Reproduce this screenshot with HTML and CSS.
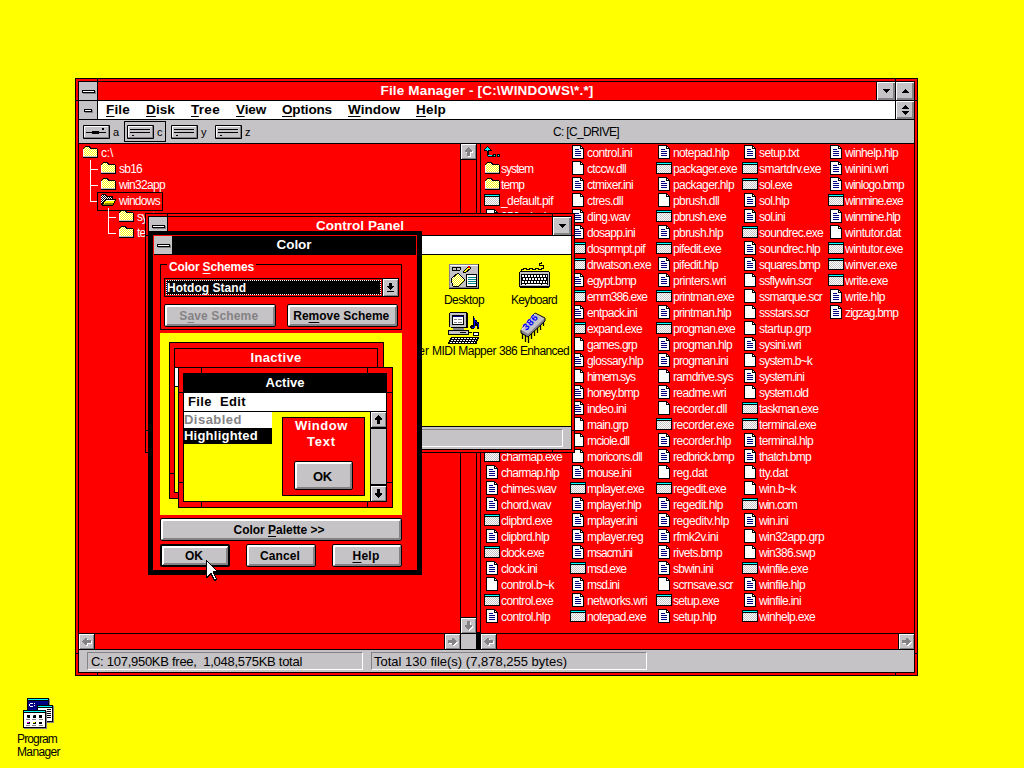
FILE: index.html
```html
<!DOCTYPE html>
<html lang="en">
<head>
<meta charset="utf-8">
<title>File Manager</title>
<link rel="stylesheet" href="styles.css">
</head>
<body>
<svg class="defs" width="0" height="0" shape-rendering="crispEdges">
  <defs>
    <pattern id="dith-y" width="2" height="2" patternUnits="userSpaceOnUse"><rect width="2" height="2" fill="#fff"/><rect width="1" height="1" fill="#ff0"/><rect x="1" y="1" width="1" height="1" fill="#ff0"/></pattern>
  </defs>
  <symbol id="i-folder" viewBox="0 0 16 16"><path d="M1 3h1V2h1V1h5v1h1v1h6v1h1v9H1z" fill="#000"/><path d="M1 4h1V3h1V2h4v1h1v1h7v8H1z" fill="#fff"/><path d="M3 2.500h4M2 3.500h6M3 4.500h12M2 5.500h13M3 6.500h12M2 7.500h13M3 8.500h12M2 9.500h13M3 10.500h12" stroke="#ff0" stroke-dasharray="1 1" fill="none"/><path d="M1 11h14v1H1z" fill="#c6c3c6"/></symbol>
  <symbol id="i-open" viewBox="0 0 16 16"><path d="M1 2h1V1h4v1h1v1h6v3h3v2h-1v2h-1v2h-1v1H2v-1H1z" fill="#000"/><path d="M2 2.500h4M1 3.500h6M2 4.500h10M1 5.500h11M2 6.500h3M1 7.500h4M2 8.500h2M1 9.500h2" stroke="#fff" stroke-dasharray="1 1" fill="none"/><path d="M6 7h9v1h-1v2h-1v2H3v-1h1V9h1V8h1z" fill="#ff0"/><path d="M6 7h8v1H6z" fill="#fff"/><path d="M5 10h8v2H3v-1h2z" fill="#848200"/></symbol>
  <symbol id="i-doc" viewBox="0 0 16 16"><path d="M2 0h9v1h1v1h1v1h1v11H2z" fill="#000"/><path d="M3 1h7v3h3v9H3z" fill="#fff"/><path d="M11 2h1v1h-1z" fill="#fff"/><path d="M5 4h4v1H5zM5 6h6v1H5zM5 8h6v1H5zM5 10h6v1H5z" fill="#000084"/></symbol>
  <symbol id="i-file" viewBox="0 0 16 16"><path d="M2 0h9v1h1v1h1v1h1v11H2z" fill="#000"/><path d="M3 1h7v3h3v9H3z" fill="#fff"/><path d="M11 2h1v1h-1z" fill="#fff"/></symbol>
  <symbol id="i-app" viewBox="0 0 16 16"><path d="M0 1h16v12H0z" fill="#000"/><path d="M1 2h14v1H1z" fill="#0ff"/><path d="M1 4h14v8H1z" fill="#fff"/><path d="M1 4.500h14M2 5.500h13M1 6.500h14M2 7.500h13M1 8.500h14M2 9.500h13M1 10.500h14M2 11.500h13" stroke="#c6c3c6" stroke-dasharray="1 1" fill="none"/></symbol>
  <symbol id="i-up" viewBox="0 0 16 16"><path d="M3 1h1v1h1v1h1v1h1v1h1v1H5v4h4v2H4v-1H3V6H0V5h0V4h1V3h1V2h1zM9 9h3v3H9zM13 9h3v3h-3z" fill="#000"/><path d="M3 2h1v1h1v1h1v1H4v5h4v1H4V6H3V5H1V4h1V3h1zM10 10h1v1h-1zM14 10h1v1h-1z" fill="#0ff"/></symbol>
  <symbol id="a-up" viewBox="0 0 9 9"><path d="M4 0h1v1h1v1h1v1h1v2H6v4H3V5H1V3h1V2h1V1h1z"/></symbol>
  <symbol id="a-down" viewBox="0 0 9 9"><path d="M4 9h1V8h1V7h1V6h1V4H6V0H3v4H1v2h1v1h1v1h1z"/></symbol>
  <symbol id="a-left" viewBox="0 0 9 9"><path d="M0 4v1h1v1h1v1h1v1h2V6h4V3H5V1H3v1H2v1H1v1z"/></symbol>
  <symbol id="a-right" viewBox="0 0 9 9"><path d="M9 4v1H8v1H7v1H6v1H4V6H0V3h4V1h2v1h1v1h1v1z"/></symbol>
  <symbol id="t-down" viewBox="0 0 7 4"><path d="M0 0h7v1H6v1H5v1H4v1H3V3H2V2H1V1H0z"/></symbol>
  <symbol id="t-up" viewBox="0 0 7 4"><path d="M0 4h7V3H6V2H5V1H4V0H3v1H2v1H1v1H0z"/></symbol>
  <symbol id="plate" viewBox="0 0 27 14"><path d="M0 0h27v14H0z"/><path d="M1 1h25v12H1z" fill="#848284"/><path d="M1 1h24v11H1z" fill="#fff"/><path d="M2 2h23v10H2z" fill="#c6c3c6"/></symbol>
  <symbol id="hard" viewBox="0 0 27 14"><use href="#plate"/><path d="M3 4h20v1H3zM3 7h20v1H3zM5 10h2v1H5z"/></symbol>
  <symbol id="floppy" viewBox="0 0 27 14"><use href="#plate"/><path d="M3 7h20v1H3zM9 6h7v3H9zM19 3h2v2h-2z"/></symbol>
</svg>

<main class="desktop">

<section class="win fm">
  <i class="nv top nl"></i><i class="nv top nr"></i><i class="nv bot nl"></i><i class="nv bot nr"></i>
  <i class="nh lft n1"></i><i class="nh rgt n1"></i><i class="nh lft n2"></i><i class="nh rgt n2"></i>
  <div class="inner">
    <header class="caption">
      <span class="sys"><i class="bar"></i></span>
      <h1 class="title"><span class="t" data-w="213">File Manager - [C:\WINDOWS\*.*]</span></h1>
      <span class="capbtn"><svg width="7" height="4"><use href="#t-down"/></svg></span>
      <span class="capbtn"><svg width="7" height="4"><use href="#t-up"/></svg></span>
    </header>
    <nav class="menu">
      <span class="sys"><i class="bar short"></i></span>
      <span class="items">
        <span class="t" data-w="24"><u>F</u>ile</span><span class="t" data-w="29"><u>D</u>isk</span><span class="t" data-w="29"><u>T</u>ree</span><span class="t" data-w="30"><u>V</u>iew</span><span class="t" data-w="50"><u>O</u>ptions</span><span class="t" data-w="52"><u>W</u>indow</span><span class="t" data-w="30"><u>H</u>elp</span>
      </span>
      <span class="capbtn restore"><svg width="7" height="4"><use href="#t-up"/></svg><svg width="7" height="4"><use href="#t-down"/></svg></span>
    </nav>
    <div class="toolbar">
      <div class="drives">
        <span class="drive"><svg class="dicon" width="27" height="14"><use href="#floppy"/></svg>a</span>
        <span class="drive on"><svg class="dicon" width="27" height="14"><use href="#hard"/></svg>c</span>
        <span class="drive"><svg class="dicon" width="27" height="14"><use href="#hard"/></svg>y</span>
        <span class="drive"><svg class="dicon" width="27" height="14"><use href="#hard"/></svg>z</span>
      </div>
      <span class="volume"><span class="t" data-w="66">C: [C_DRIVE]</span></span>
    </div>
    <div class="panes">
      <div class="pane left">
        <div class="view">
          <ul class="tree">
            <li class="l0"><svg width="16" height="16"><use href="#i-folder"/></svg><span class="name">c:\</span></li>
            <li class="l1"><svg width="16" height="16"><use href="#i-folder"/></svg><span class="name">sb16</span></li>
            <li class="l1"><svg width="16" height="16"><use href="#i-folder"/></svg><span class="name">win32app</span></li>
            <li class="l1 last sel"><svg width="16" height="16"><use href="#i-open"/></svg><span class="name">windows</span></li>
            <li class="l2"><svg width="16" height="16"><use href="#i-folder"/></svg><span class="name">system</span></li>
            <li class="l2 last"><svg width="16" height="16"><use href="#i-folder"/></svg><span class="name">temp</span></li>
          </ul>
          <div class="vscroll"><span class="sb dim"><svg width="9" height="9"><use href="#a-up"/></svg></span><span class="sb dim"><svg width="9" height="9"><use href="#a-down"/></svg></span></div>
        </div>
        <div class="hscroll"><span class="sb dim"><svg width="9" height="9"><use href="#a-left"/></svg></span><span class="sb dim"><svg width="9" height="9"><use href="#a-right"/></svg></span><span class="corner"></span></div>
      </div>
      <div class="split"></div>
      <div class="pane right">
        <div class="view files" id="files"></div>
        <div class="hscroll"><span class="sb dim"><svg width="9" height="9"><use href="#a-left"/></svg></span><span class="sb dim"><svg width="9" height="9"><use href="#a-right"/></svg></span></div>
      </div>
    </div>
    <footer class="status">
      <span class="field free"><span class="t" data-w="211">C: 107,950KB free, &nbsp;1,048,575KB total</span></span>
      <span class="field total"><span class="t" data-w="193">Total 130 file(s) (7,878,255 bytes)</span></span>
    </footer>
  </div>
</section>

<section class="win cp">
  <i class="nv top nl"></i><i class="nv top nr"></i><i class="nv bot nl"></i><i class="nv bot nr"></i>
  <i class="nh lft n1"></i><i class="nh rgt n1"></i><i class="nh lft n2"></i><i class="nh rgt n2"></i>
  <div class="inner">
    <header class="caption">
      <span class="sys"><i class="bar"></i></span>
      <h2 class="title"><span class="t" data-w="88">Control Panel</span></h2>
      <span class="capbtn"><svg width="7" height="4"><use href="#t-down"/></svg></span>
    </header>
    <div class="menu"></div>
    <div class="applets">
      <figure></figure>
      <figure>
        <svg width="32" height="32" shape-rendering="crispEdges">
          <path d="M1 3h30v25H1z" fill="#000"/><path d="M1 3h29v24H1z" fill="#848284"/><path d="M2 4h28v22H2z" fill="#c6c3c6"/><path d="M2 4h28v1H2z" fill="#fff"/>
          <path d="M4 6h9v1H4zM4 7h1v3H4zM8 7h1v3H8zM12 7h1v2h-1zM5 9h3v1H5zM9 9h3v1H9z" fill="#000"/>
          <path d="M3 18l7-6 7 7-7 7-5-1z" fill="url(#dith-y)" stroke="#000"/><path d="M15 11l6-6 2 2-6 5z" fill="#ff0" stroke="#000"/><path d="M20 5h2v2h-2z" fill="red"/>
          <path d="M18 13h11v13H18z" fill="#000"/><path d="M19 14h9v11h-9z" fill="#fff"/><path d="M20 16h8v1h-8zM20 18h8v1h-8zM20 20h8v1h-8zM20 22h8v1h-8z" fill="#008284"/>
        </svg>
        <figcaption><span class="t" data-w="40">Desktop</span></figcaption>
      </figure>
      <figure>
        <svg width="32" height="32" shape-rendering="crispEdges">
          <path d="M3.500 10V8h2V7h3v1h3V7h3v1h3V7h3v1h3V7h2V4h-4V2h2V1" fill="none" stroke="#000"/>
          <path d="M2 10h29v1h1v15h-1v1H2v-1H1V11h1z" fill="#000"/><path d="M2 11h29v14H2z" fill="#c6c3c6"/><path d="M3 13h27v11H3z" fill="#000"/>
          <path d="M4 15h25M5 18h24M4 21h25" stroke="#fff" stroke-width="2" stroke-dasharray="2 1"/><path d="M4 23.500h3m1 0h15m1 0h5" stroke="#fff"/>
        </svg>
        <figcaption><span class="t" data-w="46">Keyboard</span></figcaption>
      </figure>
      <figure class="tail"><figcaption>er</figcaption></figure>
      <figure>
        <svg width="32" height="32" shape-rendering="crispEdges">
          <path d="M2 0h17v1h1v15H3v-1H1V1h1z" fill="#000"/><path d="M2 1h16v14H2z" fill="#c6c3c6"/><path d="M4 3h12v10H4z" fill="#000"/><path d="M5 4h10v8H5z" fill="#fff"/><path d="M5 4h10v1H5z" fill="#000084"/><path d="M6 7h3v1H6zM10 7h4v1h-4zM6 10h3v1H6zM10 10h4v1h-4z" fill="#848284"/>
          <path d="M5 16h11v2H5z" fill="#848284"/><path d="M0 18h21v5H0z" fill="#000"/><path d="M1 19h19v3H1z" fill="#c6c3c6"/><path d="M12 20h6v1h-6z"/>
          <path d="M3 25h28v2h-1v2h-1v3H0v-2h1v-2h1v-2h1z" fill="#000"/><path d="M4 26.500h25M3 28.500h25M2 30.500h25" stroke="#fff" stroke-dasharray="2 1"/>
          <path d="M25 4h1v2h1v2h2v2h2v7h-2v-3h-2v-2h-1v5h-3v-1h-1v-2h1v-1h2z" fill="#000"/><path d="M26 6v9h-2M27 9l3 3v3" stroke="#00f" fill="none"/><path d="M25 20h5v3h-5z" fill="#fff" stroke="#000"/><path d="M20 20.500h4" stroke="#000"/>
        </svg>
        <figcaption><span class="t" data-w="64">MIDI Mapper</span></figcaption>
      </figure>
      <figure>
        <svg width="32" height="32">
          <path d="M4.500 21v6M7.500 22v8M10.500 22v9M13.500 19v8M16.500 16v8M19.500 13v8M22.500 10v8M25.500 6v8" stroke="#000" stroke-width="1.300"/>
          <path d="M3 18L17 1l10 5v3L10 25l-7-4z" fill="#848284" stroke="#000"/><path d="M3 18L17 1.500l9.500 5L10 22z" fill="#c6c3c6"/><path d="M3.500 18L17 2" stroke="#fff"/>
          <text x="7" y="18" class="chip" transform="rotate(-47 9 17)">386</text>
        </svg>
        <figcaption><span class="t" data-w="70">386 Enhanced</span></figcaption>
      </figure>
    </div>
    <footer class="status"><span class="field"></span></footer>
  </div>
</section>

<section class="dialog">
  <header class="caption"><span class="sys"><i class="bar"></i></span><h2 class="title"><span class="t" data-w="35">Color</span></h2></header>
  <div class="form">
    <div class="group">
      <span class="legend"><span class="t" data-w="85">Color <u>S</u>chemes</span></span>
      <div class="combo"><span class="value"><span class="t" data-w="79">Hotdog Stand</span></span><span class="drop"><svg width="9" height="9" shape-rendering="crispEdges"><path d="M3 0h3v3h2v1H7v1H6v1H5v1H4V6H3V5H2V4H1V3h2zM1 8h7v1H1z"/></svg></span></div>
      <div class="pair"><button class="btn off"><span class="t" data-w="79">S<u>a</u>ve Scheme</span></button><button class="btn"><span class="t" data-w="96">Re<u>m</u>ove Scheme</span></button></div>
    </div>
    <div class="preview">
      <div class="mini inactive"><i class="nh foot"></i><div class="mbody"><div class="mcap"><span class="t" data-w="51">Inactive</span></div><div class="mmenu"></div><div class="mwork"></div></div></div>
      <div class="mini active">
        <i class="nv top nl"></i><i class="nv top nr"></i><i class="nv bot nl"></i><i class="nv bot nr"></i>
        <i class="nh lft n1"></i><i class="nh rgt n1"></i><i class="nh lft n2"></i><i class="nh rgt n2"></i>
        <div class="mbody">
          <div class="mcap"><span class="t" data-w="39">Active</span></div>
          <div class="mmenu"><span class="t" data-w="24">File</span><span class="t" data-w="26">Edit</span></div>
          <div class="mwork">
            <div class="mlist"><span class="dis"><span class="t" data-w="58">Disabled</span></span><span class="hi"><span class="t" data-w="74">Highlighted</span></span></div>
            <div class="mwin"><span class="t" data-w="53">Window</span><span class="t" data-w="29">Text</span><button class="btn"><span class="t" data-w="19">OK</span></button></div>
            <div class="mscroll"><span class="sb"><svg width="9" height="9"><use href="#a-up"/></svg></span><span class="sb"><svg width="9" height="9"><use href="#a-down"/></svg></span></div>
          </div>
        </div>
      </div>
    </div>
    <button class="btn wide"><span class="t" data-w="91">Color <u>P</u>alette &gt;&gt;</span></button>
    <div class="actions"><button class="btn default"><span class="t" data-w="18">OK</span></button><button class="btn"><span class="t" data-w="40">Cancel</span></button><button class="btn"><span class="t" data-w="27"><u>H</u>elp</span></button></div>
  </div>
</section>

<figure class="progman">
  <svg width="32" height="32" shape-rendering="crispEdges">
    <path d="M5 1h22v13H5z" fill="#848284"/><path d="M4 0h22v13H4z" fill="#000"/><path d="M5 1h20v1H5z" fill="#0ff"/><path d="M5 3h20v10H5z" fill="#000084"/><path d="M7 5h3v1H7zM6 6h1v2H6zM7 8h3v1H7zM11 5h1v1h-1zM11 7h1v1h-1z" fill="#fff"/>
    <path d="M15 8h16v17H15z" fill="#848284"/><path d="M14 7h16v17H14z" fill="#000"/><path d="M15 8h14v1H15z" fill="#0ff"/><path d="M15 10h14v13H15z" fill="#fff"/><path d="M24 11h4v1h-4zM24 13h4v1h-4zM24 15h4v1h-4zM24 17h4v1h-4zM24 19h4v1h-4z"/>
    <path d="M1 13h23v18H1z" fill="#848284"/><path d="M0 12h23v18H0z" fill="#000"/><path d="M1 13h21v1H1z" fill="#0ff"/><path d="M1 15h21v14H1z" fill="#fff"/>
    <path d="M4 17h3v3H4zM10 17h3v3h-3zM16 17h3v3h-3zM4 24h3v2H4zM10 24h3v2h-3zM16 24h3v2h-3z"/><path d="M3 21h4v1H3zM9 21h4v1H9zM16 21h4v1h-4zM3 27h4v1H3zM9 27h4v1H9zM16 27h4v1h-4z" fill="#848284"/><path d="M4 19h1v1H4zM10 17h1v1h-1z" fill="#008284"/><path d="M4 24h2v1H4z" fill="#f0f"/><path d="M10 24h2v1h-2z" fill="#ff0"/>
  </svg>
  <figcaption><span class="t" data-w="40">Program</span><span class="t" data-w="43">Manager</span></figcaption>
</figure>

<svg class="cursor" width="12" height="21" shape-rendering="crispEdges"><path d="M0 0h1v1h1v1h1v1h1v1h1v1h1v1h1v1h1v1h1v1h1v1h1v2H8v2h1v2h1v2h1v2h-1v1H8v-1H7v-2H6v-2H5v-1H4v1H3v1H2v1H0z" fill="#000"/><path d="M1 2h1v1h1v1h1v1h1v1h1v1h1v1h1v1h1v1h1v1H7v3h1v2h1v2h1v1H8v-2H7v-2H6v-2H4v1H3v1H2v1H1z" fill="#fff"/></svg>
</main>
<script src="app.js"></script>
</body>
</html>
```
FILE: styles.css
```css
* { box-sizing: border-box; margin: 0; padding: 0; }
:root { --gray: #c6c3c6; --dark: #848284; --red: #f00; --yellow: #ff0; }
body { font: 12px/16px "Liberation Sans", Arial, sans-serif; color: #000; }
.defs { position: absolute; }
svg { display: block; flex: none; }
use, symbol path { shape-rendering: crispEdges; }
.desktop { position: relative; width: 1024px; height: 768px; overflow: hidden; background: var(--yellow); }
.t { display: inline-block; white-space: nowrap; }
u { text-decoration: underline; text-decoration-thickness: 1px; text-underline-offset: 2px; }

/* windows */
.win { position: absolute; border: 1px solid #000; padding: 2px; background: var(--red); }
.fm { left: 75px; top: 78px; width: 843px; height: 598px; }
.cp { left: 145px; top: 213px; width: 430px; height: 240px; }
.inner { border: 1px solid #000; height: 100%; display: flex; flex-direction: column; }

/* frame notches */
.nv, .nh { position: absolute; background: #000; }
.nv { width: 1px; height: 3px; }
.nh { height: 1px; width: 3px; }
.top { top: 0; } .bot { bottom: 0; } .lft { left: 0; } .rgt { right: 0; }
.nl { left: 21px; } .nr { right: 21px; } .n1 { top: 21px; } .n2 { bottom: 21px; }

.caption { height: 19px; display: flex; border-bottom: 1px solid #000; flex: none; }
.sys { width: 19px; flex: none; background: var(--gray); border-right: 1px solid #000; display: flex; align-items: center; justify-content: center; }
.bar { width: 13px; height: 3px; background: #fff; border: 1px solid #000; box-shadow: 1px 1px var(--dark); }
.bar.short { width: 8px; }
.title { flex: 1; font: bold 13.5px/18px "Liberation Sans", Arial, sans-serif; color: #fff; text-align: center; }
.capbtn { width: 19px; flex: none; border-left: 1px solid #000; background: var(--gray); display: flex; flex-direction: column; align-items: center; justify-content: center; gap: 2px; box-shadow: inset 1px 1px #fff, inset -1px -1px var(--dark), inset -2px -2px var(--dark); }
.menu { height: 19px; flex: none; display: flex; background: #fff; border-bottom: 1px solid #000; font: bold 13.5px/17px "Liberation Sans", Arial, sans-serif; }
.items { flex: 1; display: flex; gap: 16px; padding-left: 8px; }

.toolbar { height: 24px; flex: none; background: var(--gray); border-bottom: 1px solid #000; display: flex; }
.drives { display: flex; gap: 2px; padding: 1px 0 0 1px; width: 474px; font-size: 11px; }
.drive { width: 42px; height: 21px; border: 1px solid transparent; display: flex; align-items: center; gap: 3px; padding-left: 2px; }
.drive.on { border-color: #000; }
.dicon { border-radius: 1px; }
.volume { font-size: 12px; line-height: 25px; }

.panes { height: 506px; flex: none; display: flex; }
.pane { display: flex; flex-direction: column; }
.left { width: 398px; } .right { width: 433px; }
.view { height: 489px; display: flex; }
.split { width: 4px; border-right: 1px solid #000; background: linear-gradient(var(--red) 488px, #000 488px); }
.tree { flex: 1; list-style: none; color: #fff; padding: 1px 0 0 3px; }
.tree li { display: flex; gap: 3px; height: 16px; position: relative; }
.l1 { margin-left: 18px; } .l2 { margin-left: 36px; }
.l1::before, .l2::before { content: ""; position: absolute; left: -10px; top: -1px; width: 7px; height: 9px; border: solid #fff; border-width: 0 0 1px 1px; }
.l1:not(.last)::after, .l2:not(.last)::after { content: ""; position: absolute; left: -10px; top: 8px; width: 1px; height: 7px; background: #fff; }
.sel .name { position: relative; }
.sel .name::before { content: ""; position: absolute; left: -22px; right: -3px; top: -1px; height: 17px; border: 1px solid #000; }
.vscroll { width: 17px; border: solid #000; border-width: 0 1px; display: flex; flex-direction: column; justify-content: space-between; }
.hscroll { height: 17px; border: solid #000; border-width: 1px 0; display: flex; justify-content: space-between; }
.sb { background: var(--gray); display: flex; align-items: center; justify-content: center; width: 15px; height: 15px; flex: none; box-shadow: inset 1px 1px #fff, inset -1px -1px var(--dark); }
.sb.dim { fill: var(--dark); }
.sb.dim svg { filter: drop-shadow(1px 1px 0 #fff); }
.vscroll .sb:first-child { border-bottom: 1px solid #000; height: 16px; }
.vscroll .sb:last-child { border-top: 1px solid #000; height: 16px; }
.hscroll .sb:first-child { border-right: 1px solid #000; width: 16px; }
.hscroll .sb:nth-child(2) { border-left: 1px solid #000; width: 16px; margin-left: auto; }
.corner { width: 17px; background: var(--gray); border: solid #000; border-width: 0 1px; }

.files { padding: 1px 0 0 3px; color: #fff; }
.col { width: 86px; flex: none; }
.file { height: 16px; display: flex; gap: 1px; }
.covered { height: 224px; }

.status { flex: 1; background: var(--gray); display: flex; padding: 2px 8px; gap: 8px; }
.field { height: 18px; border: 1px solid; border-color: var(--dark) #fff #fff var(--dark); font-size: 13px; line-height: 17px; padding-left: 3px; }
.free { width: 276px; } .total { width: 276px; padding-left: 2px; }
.cp .field { flex: 1; }

/* applets */
.applets { height: 172px; flex: none; background: var(--yellow); border-bottom: 1px solid #000; display: grid; grid-template-columns: repeat(3, 70px); grid-auto-rows: 51px; justify-content: end; padding: 3px 2px 0 0; }
.applets figure { display: flex; flex-direction: column; align-items: center; padding-top: 3px; }
.applets figcaption { line-height: 14px; white-space: nowrap; }
.applets .tail { align-items: flex-end; justify-content: flex-end; padding-bottom: 2px; }
.chip { font: bold 10px "Liberation Mono", monospace; fill: #00f; }

/* colour dialog */
.dialog { position: absolute; left: 148px; top: 231px; width: 274px; height: 344px; border: solid #000; border-width: 4px 5px 5px; background: var(--red); padding: 1px; font-weight: bold; }
.dialog .caption { background: #000; }
.dialog .sys { width: 18px; border: 0; }
.form { width: 242px; margin: 9px 0 0 6px; }
.group { position: relative; height: 66px; border: 1px solid #000; padding: 13px 3px 0; }
.legend { position: absolute; left: 6px; top: -4px; line-height: 12px; padding: 0 2px; background: var(--red); color: #fff; }
.combo { width: 235px; height: 19px; border: 1px solid #000; padding: 1px; display: flex; }
.value { width: 216px; background: #000; color: #fff; border: 1px dotted #fff; line-height: 15px; height: 15px; }
.drop { width: 16px; height: 17px; margin: -1px -1px 0 1px; border-left: 1px solid #000; background: var(--gray); display: flex; align-items: center; justify-content: center; box-shadow: inset 1px 1px #fff, inset -1px -1px var(--dark); }
.pair { display: flex; gap: 11px; margin-top: 7px; }
.btn { height: 23px; border: 1px solid #000; border-radius: 2px; background: var(--gray); font: bold 12px/17px "Liberation Sans", Arial, sans-serif; color: #000; box-shadow: inset 1px 1px #fff, inset -1px -1px var(--dark), inset 2px 2px #fff, inset -2px -2px var(--dark); display: flex; align-items: center; justify-content: center; padding: 1px 2px 0 0; }
.pair .btn { width: 112px; }
.btn.off { color: var(--dark); }
.btn.wide { width: 242px; margin-top: 3px; padding-right: 4px; }
.btn.default { border-width: 2px; }
.actions { display: flex; justify-content: space-between; margin-top: 3px; }
.actions .btn { width: 70px; }

.preview { position: relative; height: 182px; margin-top: 3px; background: var(--yellow); }
.mini { position: absolute; border: 1px solid #000; background: var(--red); padding: 5px 5px 5px 4px; }
.inactive { left: 9px; top: 9px; width: 215px; height: 157px; }
.active { left: 18px; top: 34px; width: 215px; height: 141px; }
.mbody { border: 1px solid #000; height: 100%; display: flex; flex-direction: column; background: var(--yellow); }
.mcap { height: 19px; flex: none; line-height: 17px; font-size: 13px; color: #fff; background: var(--red); border-bottom: 1px solid #000; text-align: center; }
.active .mcap { background: #000; }
.mmenu { height: 19px; flex: none; background: #fff; border-bottom: 1px solid #000; display: flex; gap: 8px; padding-left: 4px; line-height: 17px; font-size: 13px; }
.mwork { flex: 1; display: flex; }
.mlist { width: 88px; line-height: 16px; }
.mlist > span { display: block; height: 16px; font-size: 13px; }
.dis { background: #fff; color: var(--dark); }
.hi { background: #000; color: #fff; }
.mwin { width: 83px; height: 79px; margin: 5px 0 0 10px; border: 1px solid #000; background: var(--red); color: #fff; display: flex; flex-direction: column; align-items: center; font-size: 13px; padding-right: 4px; }
.mwin .btn { width: 59px; height: 29px; margin: 11px 0 0 4px; font-size: 13px; }
.mscroll { margin-left: auto; width: 16px; background: var(--gray); border-left: 1px solid #000; display: flex; flex-direction: column; justify-content: space-between; }
.mscroll .sb { height: 17px; }
.mscroll .sb:first-child { border-bottom: 2px solid #000; }
.mscroll .sb:last-child { border-top: 2px solid #000; }
.mini .nv { height: 5px; } .mini .nh { width: 5px; }
.mini .nl { left: 22px; } .mini .nr { right: 24px; } .mini .n1 { top: 24px; } .mini .n2 { bottom: 24px; }
.inactive .foot { left: 0; bottom: 24px; }

.progman { position: absolute; left: 17px; top: 698px; width: 44px; display: flex; flex-direction: column; }
.progman svg { margin-left: 6px; }
.progman figcaption { display: flex; flex-direction: column; line-height: 13px; margin-top: 3px; }
.cursor { position: absolute; left: 206px; top: 560px; }
```
FILE: app.js
```js
// One string per column of the directory listing; "-" marks rows behind the Control Panel.
const columns = [
  "up: dir:system dir:temp _default.pif 256color.bmp - charmap.exe charmap.hlp chimes.wav chord.wav clipbrd.exe clipbrd.hlp clock.exe clock.ini control.b~k control.exe control.hlp",
  "control.ini ctccw.dll ctmixer.ini ctres.dll ding.wav dosapp.ini dosprmpt.pif drwatson.exe egypt.bmp emm386.exe entpack.ini expand.exe games.grp glossary.hlp himem.sys honey.bmp indeo.ini main.grp mciole.dll moricons.dll mouse.ini mplayer.exe mplayer.hlp mplayer.ini mplayer.reg msacm.ini msd.exe msd.ini networks.wri notepad.exe",
  "notepad.hlp packager.exe packager.hlp pbrush.dll pbrush.exe pbrush.hlp pifedit.exe pifedit.hlp printers.wri printman.exe printman.hlp progman.exe progman.hlp progman.ini ramdrive.sys readme.wri recorder.dll recorder.exe recorder.hlp redbrick.bmp reg.dat regedit.exe regedit.hlp regeditv.hlp rfmk2v.ini rivets.bmp sbwin.ini scrnsave.scr setup.exe setup.hlp",
  "setup.txt smartdrv.exe sol.exe sol.hlp sol.ini soundrec.exe soundrec.hlp squares.bmp ssflywin.scr ssmarque.scr ssstars.scr startup.grp sysini.wri system.b~k system.ini system.old taskman.exe terminal.exe terminal.hlp thatch.bmp tty.dat win.b~k win.com win.ini win32app.grp win386.swp winfile.exe winfile.hlp winfile.ini winhelp.exe",
  "winhelp.hlp winini.wri winlogo.bmp winmine.exe winmine.hlp wintutor.dat wintutor.exe winver.exe write.exe write.hlp zigzag.bmp"
];

function iconFor(name) {
  if (/\.(exe|com|pif)$/.test(name)) return "app";
  if (/\.(ini|hlp|wav|bmp|wri|txt|reg)$/.test(name)) return "doc";
  return "file";
}

document.getElementById("files").innerHTML = columns.map(list =>
  '<div class="col">' + list.split(" ").map(entry => {
    if (entry === "-") return '<div class="covered"></div>';
    let icon, name = entry;
    if (entry === "up:") { icon = "up"; name = ""; }
    else if (entry.startsWith("dir:")) { icon = "folder"; name = entry.slice(4); }
    else icon = iconFor(entry);
    return `<div class="file"><svg width="16" height="16"><use href="#i-${icon}"/></svg><span class="name">${name}</span></div>`;
  }).join("") + "</div>"
).join("");

// Advance widths of the 8pt screen font, used to space names on whole pixels.
const advance = { f: 3, i: 2, j: 2, l: 2, m: 8, r: 4, s: 5, t: 3, v: 6, w: 8, c: 5, k: 5, x: 5, y: 5, z: 5, ".": 3, ":": 3, "\\": 4, "~": 7 };

function fit(el, width) {
  const range = document.createRange();
  range.selectNodeContents(el);
  const natural = range.getBoundingClientRect().width;
  el.style.letterSpacing = ((width - natural) / el.textContent.length).toFixed(3) + "px";
}

document.querySelectorAll(".name").forEach(el => {
  if (!el.textContent) return;
  fit(el, [...el.textContent].reduce((sum, ch) => sum + (advance[ch] || 6), 0));
});
document.querySelectorAll(".t").forEach(el => {
  fit(el, Number(el.dataset.w));
  el.style.width = el.dataset.w + "px";
});
```
